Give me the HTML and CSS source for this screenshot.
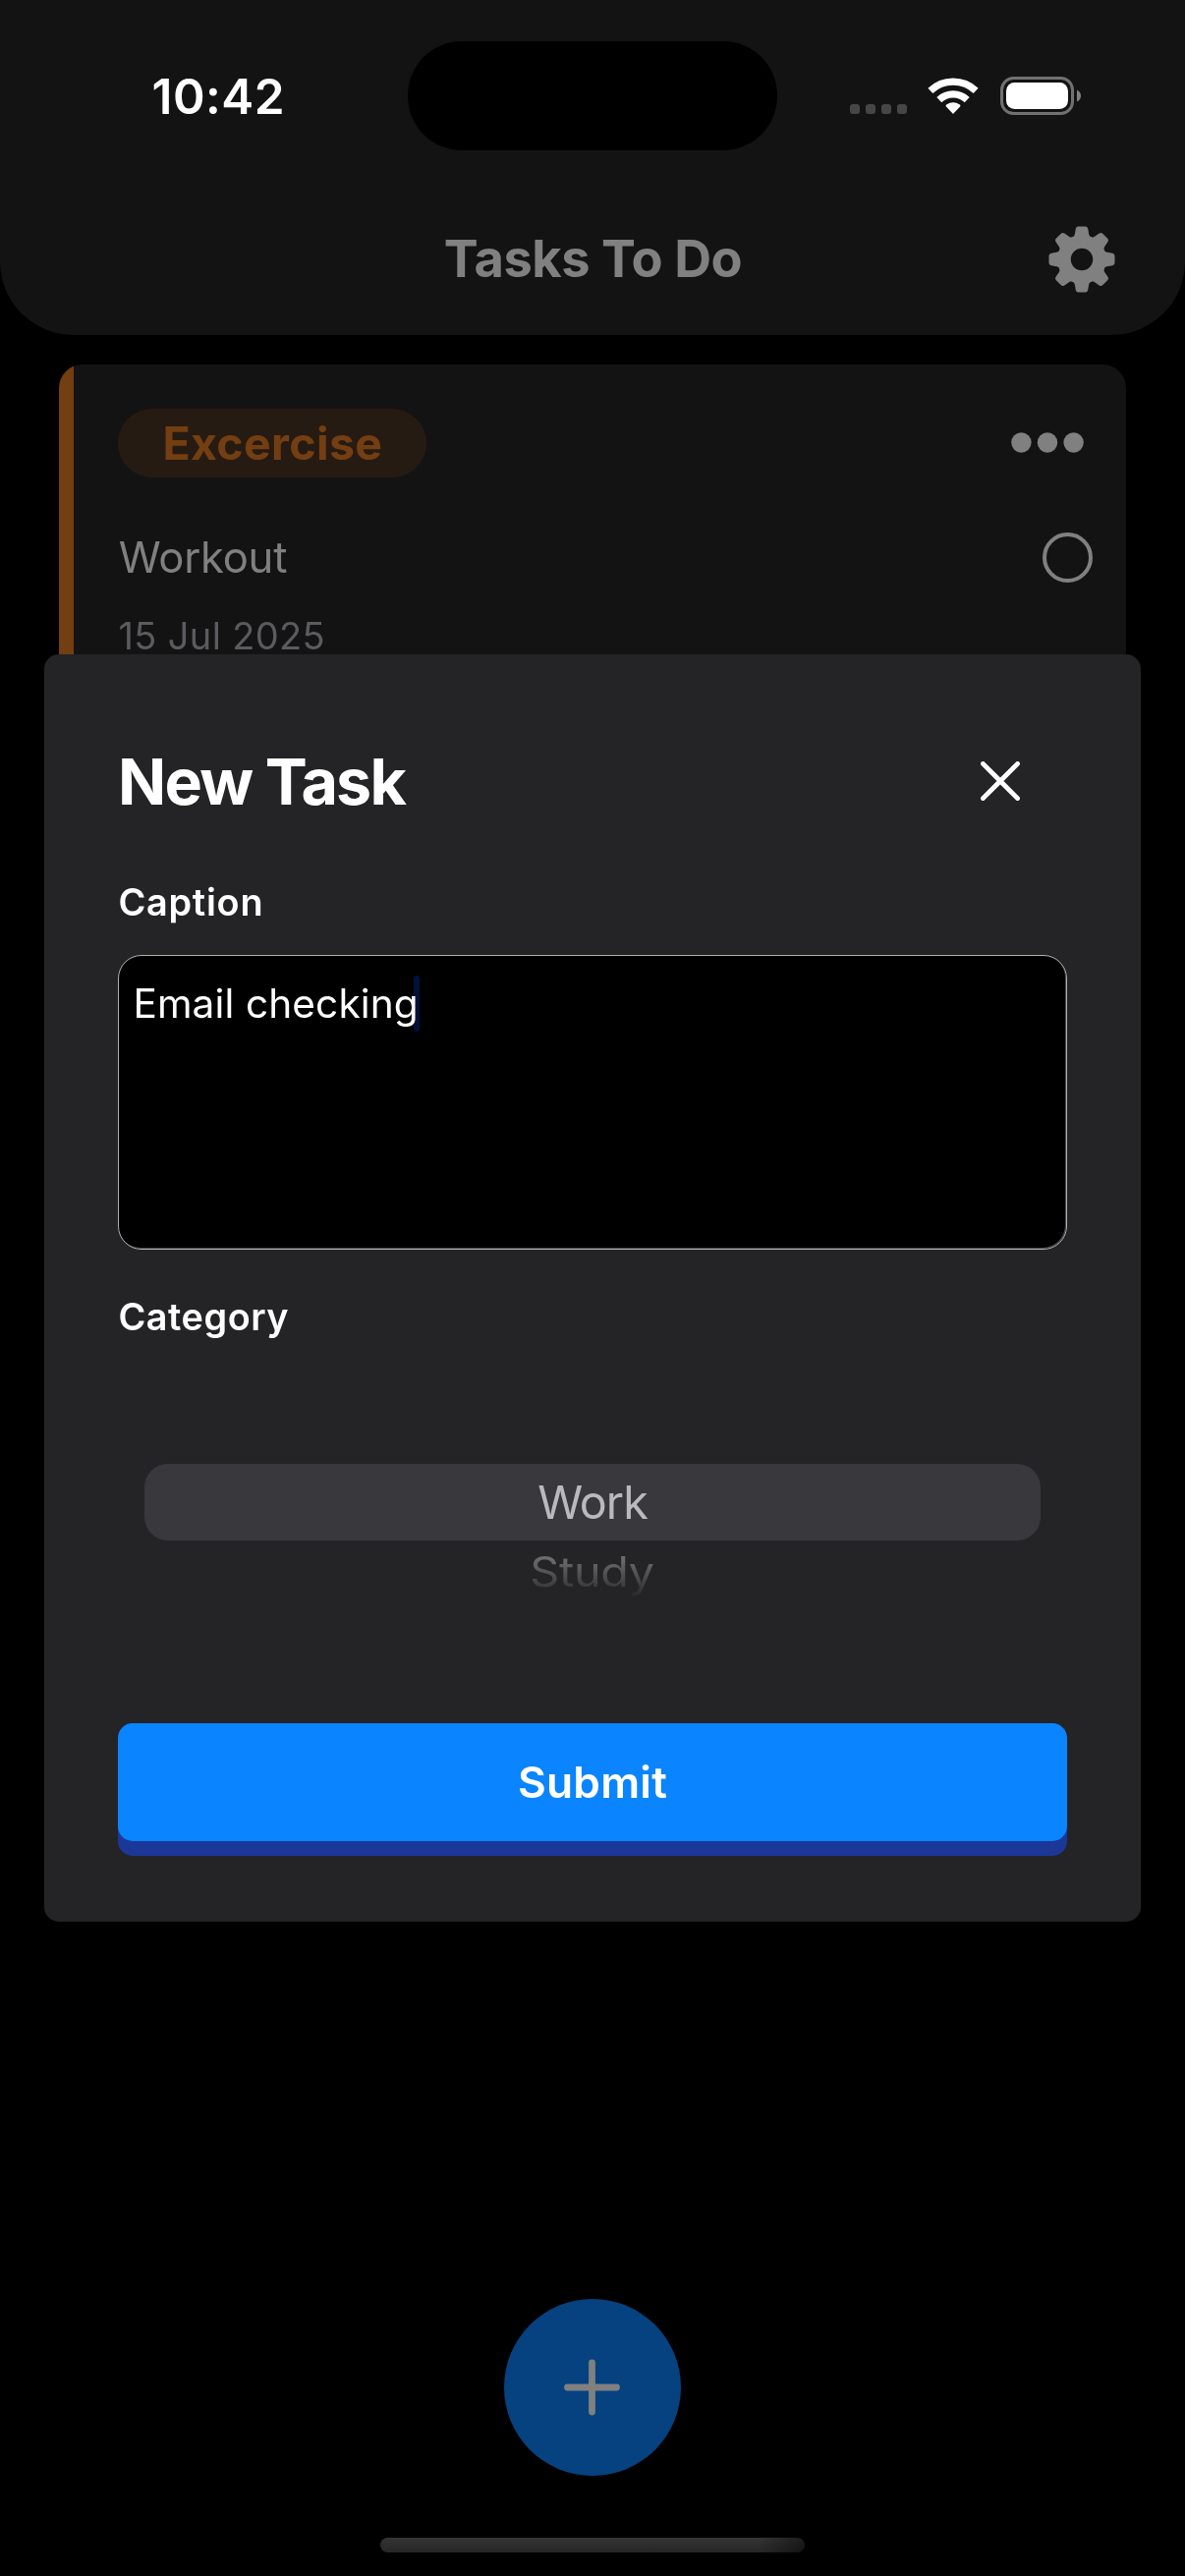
FILE: index.html
```html
<!DOCTYPE html>
<html lang="en">
<head>
  <meta charset="utf-8">
  <title>Tasks To Do</title>
  <link rel="stylesheet" href="styles.css">
</head>
<body>
  <div class="screen">
    <header class="header">
      <div class="status-bar">
        <div class="status-time">10:42</div>
        <div class="island"></div>
        <div class="status-icons">
          <svg class="cellular" width="58" height="10" viewBox="0 0 58 10">
            <rect x="0" width="10" height="10" rx="3"/>
            <rect x="16" width="10" height="10" rx="3"/>
            <rect x="32" width="10" height="10" rx="3"/>
            <rect x="48" width="10" height="10" rx="3"/>
          </svg>
          <svg class="wifi" width="52" height="38" viewBox="0 0 52 38">
            <path class="wifi-band" d="M2.9 13.3A33.5 33.5 0 0 1 49.1 13.3"/>
            <path class="wifi-band" d="M11.8 22.6A20.6 20.6 0 0 1 40.2 22.6"/>
            <path class="wifi-dot" d="M26 37L18.9 29.4Q18 28.4 19.2 27.6A12 12 0 0 1 32.8 27.6Q34 28.4 33.1 29.4Z"/>
          </svg>
          <svg class="battery" width="82" height="39" viewBox="0 0 82 39">
            <rect class="battery-shell" x="1.5" y="1.5" width="72" height="36" rx="12"/>
            <rect class="battery-level" x="6" y="6" width="63" height="27" rx="8.5"/>
            <path class="battery-nub" d="M78 13.5Q82 15.5 82 19.5T78 25.5Z"/>
          </svg>
        </div>
      </div>
      <div class="nav">
        <h1 class="nav-title">Tasks To Do</h1>
        <svg class="gear" width="68" height="68" viewBox="-34 -34 68 68">
          <defs>
            <path id="tooth" d="M-9.8 -22.5Q-7.6 -23 -7.2 -25.6L-6.2 -31.2Q-5.7 -33.5 -3.6 -33.5H3.6Q5.7 -33.5 6.2 -31.2L7.2 -25.6Q7.6 -23 9.8 -22.5Z"/>
          </defs>
          <circle class="gear-ring" r="18"/>
          <use href="#tooth"/>
          <use href="#tooth" transform="rotate(45)"/>
          <use href="#tooth" transform="rotate(90)"/>
          <use href="#tooth" transform="rotate(135)"/>
          <use href="#tooth" transform="rotate(180)"/>
          <use href="#tooth" transform="rotate(225)"/>
          <use href="#tooth" transform="rotate(270)"/>
          <use href="#tooth" transform="rotate(315)"/>
        </svg>
      </div>
    </header>

    <main class="list">
      <article class="card">
        <div class="card-top">
          <span class="tag">Excercise</span>
          <svg class="more" width="74" height="21" viewBox="0 0 74 21">
            <circle cx="10.4" cy="10.5" r="10.2"/>
            <circle cx="37" cy="10.5" r="10.2"/>
            <circle cx="63.6" cy="10.5" r="10.2"/>
          </svg>
        </div>
        <div class="card-row">
          <span class="card-name">Workout</span>
          <span class="check"></span>
        </div>
        <div class="card-date">15 Jul 2025</div>
      </article>
    </main>

    <button class="fab" aria-label="Add task">
      <svg width="58" height="58" viewBox="0 0 58 58"><path d="M28.5 4V54M3.5 29H53.5"/></svg>
    </button>
    <div class="home-indicator"></div>

    <section class="modal">
      <div class="modal-head">
        <h2 class="modal-title">New Task</h2>
        <svg class="close" width="40" height="40" viewBox="0 0 40 40"><path d="M2.4 2.4L37.6 37.6M37.6 2.4L2.4 37.6"/></svg>
      </div>
      <div class="label">Caption</div>
      <div class="textarea"><span class="textarea-value">Email checking</span><span class="caret"></span></div>
      <div class="label label-category">Category</div>
      <div class="picker">
        <div class="picker-selected"><span class="picker-work">Work</span></div>
        <div class="picker-next">Study</div>
      </div>
      <button class="submit">Submit</button>
    </section>
  </div>
</body>
</html>
```
FILE: styles.css
```css
* {
  box-sizing: border-box;
  margin: 0;
  padding: 0;
}

body {
  background: #000;
  color: #fff;
  font-family: Inter, "Liberation Sans", sans-serif;
}

svg {
  display: block;
  flex: none;
}

button {
  border: 0;
  font-family: inherit;
}

.screen {
  position: relative;
  display: flex;
  flex-direction: column;
  align-items: center;
  width: 1206px;
  height: 2622px;
  overflow: hidden;
  background: #000;
}

/* Header */
.header {
  width: 100%;
  height: 341px;
  border-radius: 0 0 75px 75px;
  background: #131313;
}

.status-bar {
  display: grid;
  grid-template-columns: 415px 376px 415px;
  height: 186px;
  padding: 42px 0 34px;
}

.status-time {
  padding: 1px 0 0 154.5px;
  font-size: 49.5px;
  font-weight: 600;
  line-height: 110px;
  letter-spacing: 0.5px;
}

.island {
  border-radius: 55px;
  background: #000;
}

.status-icons {
  display: flex;
  align-items: flex-start;
  padding: 36px 0 0 74px;
}

.cellular {
  margin: 28px 21.5px 0 0;
  fill: #464646;
}

.wifi {
  margin: 1px 22.5px 0 -1px;
}

.wifi-band {
  fill: none;
  stroke: #fff;
  stroke-width: 7.2;
}

.wifi-dot,
.battery-level {
  fill: #fff;
}

.battery-shell {
  fill: none;
  stroke: #717171;
  stroke-width: 3;
}

.battery-nub {
  fill: #818181;
}

.nav {
  display: grid;
  grid-template-columns: 1fr auto 1fr;
  align-items: center;
  height: 155px;
  padding: 0 71px;
}

.nav-title {
  grid-column: 2;
  margin-top: -2px;
  padding-left: 1px;
  color: #808080;
  font-size: 52.4px;
  font-weight: 700;
  line-height: 64px;
  letter-spacing: -0.45px;
}

.gear {
  justify-self: end;
  fill: #808080;
}

.gear-ring {
  fill: none;
  stroke: #808080;
  stroke-width: 13.5;
}

/* Task list */
.list {
  width: 100%;
  padding: 30px 60px;
}

.card {
  height: 360px;
  padding: 45px 34px 0 60px;
  border-radius: 24px;
  background: linear-gradient(to right, #733e11 15px, #131313 15px);
}

.card-top {
  display: flex;
  align-items: center;
  justify-content: space-between;
  height: 70px;
  padding-right: 9px;
}

.tag {
  width: 314px;
  border-radius: 35px;
  background: #261b13;
  color: #733e11;
  font-size: 46.5px;
  font-weight: 700;
  line-height: 70px;
  letter-spacing: 0.34px;
  text-indent: 45.4px;
}

.more {
  margin-top: -2px;
  fill: #808080;
}

.card-row {
  display: flex;
  align-items: center;
  justify-content: space-between;
  height: 60px;
  margin-top: 51px;
}

.card-name {
  padding: 2px 0 0 0.8px;
  color: #808080;
  font-size: 43.6px;
  line-height: 60px;
  letter-spacing: -0.25px;
}

.check {
  width: 51px;
  height: 51px;
  border: 4.3px solid #808080;
  border-radius: 50%;
}

.card-date {
  margin-top: 26px;
  padding-left: 0.5px;
  color: #5b5b5f;
  font-size: 38px;
  line-height: 48px;
  letter-spacing: 0.35px;
}

/* Floating button and home indicator */
.fab {
  display: flex;
  align-items: center;
  justify-content: center;
  width: 180px;
  height: 180px;
  margin-top: auto;
  border-radius: 50%;
  background: #05427f;
}

.fab path {
  fill: none;
  stroke: #808080;
  stroke-width: 6.8;
  stroke-linecap: round;
}

.home-indicator {
  width: 432px;
  height: 15px;
  margin: 63px 0 24px;
  border-radius: 8px;
  background:
    linear-gradient(100deg, transparent 89%, rgba(0, 0, 0, 0.45) 99%),
    linear-gradient(#343434, #272727);
}

/* New task dialog, floating over the list */
.modal {
  position: absolute;
  top: 666px;
  left: 45px;
  display: flex;
  flex-direction: column;
  width: 1116px;
  height: 1290px;
  padding: 89px 75px 0;
  border-radius: 15px;
  background: #242426;
}

.modal-head {
  display: flex;
  align-items: center;
  justify-content: space-between;
  height: 80px;
  padding-right: 48px;
}

.modal-title {
  padding-top: 2px;
  font-size: 64.6px;
  font-weight: 700;
  line-height: 80px;
  letter-spacing: -1.8px;
}

.close path {
  fill: none;
  stroke: #fff;
  stroke-width: 4.8;
  stroke-linecap: round;
}

.label {
  margin-top: 59px;
  padding-left: 0.4px;
  font-size: 37.8px;
  font-weight: 600;
  line-height: 48px;
  letter-spacing: 0.77px;
}

.textarea {
  display: flex;
  height: 300px;
  margin-top: 30px;
  padding: 20px 14.4px;
  border: 1px solid #b0b0b1;
  border-radius: 24px;
  background: #000;
  box-shadow: inset -1px -1px 0 #4a4a4a;
}

.textarea-value {
  font-size: 40.6px;
  line-height: 58px;
  letter-spacing: 0.12px;
}

.caret {
  width: 6px;
  height: 57px;
  margin-left: -4.5px;
  border-radius: 3px;
  background: #00113b;
  mix-blend-mode: lighten;
}

.label-category {
  margin-top: 44px;
  letter-spacing: 0.55px;
}

.picker {
  display: flex;
  flex-direction: column;
  align-items: center;
  margin-top: 126px;
}

.picker-selected {
  width: 912px;
  height: 78px;
  border-radius: 24px;
  background: #39383d;
  color: #bababc;
  font-size: 46.7px;
  line-height: 78px;
  letter-spacing: -1.01px;
  text-align: center;
}

.picker-next {
  height: 60px;
  margin: 2px 1px 0 0;
  background: linear-gradient(#747476 15%, #2e2e30 92%);
  background-clip: text;
  color: transparent;
  font-size: 46.7px;
  line-height: 60px;
  letter-spacing: -0.3px;
  transform: scaleY(0.9);
}

.submit {
  height: 120px;
  margin-top: 124px;
  border-radius: 15px;
  background: #0a84ff;
  box-shadow: 0 15px 0 #1b3798;
  color: #fff;
  font-size: 44.3px;
  font-weight: 600;
  letter-spacing: 0.23px;
}
```
